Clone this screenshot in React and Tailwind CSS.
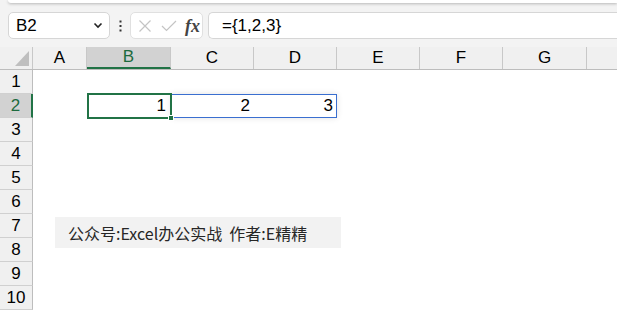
import React from "react";

const cols = [
  { l: "A", w: "w-[54px]" },
  { l: "B", w: "w-[84px]" },
  { l: "C", w: "w-[83px]" },
  { l: "D", w: "w-[83px]" },
  { l: "E", w: "w-[83px]" },
  { l: "F", w: "w-[83px]" },
  { l: "G", w: "w-[84px]" },
];

const rows = [1, 2, 3, 4, 5, 6, 7, 8, 9, 10];

export default function App() {
  return (
    <div
      className="w-[617px] h-[310px] overflow-hidden bg-white text-black"
      style={{ fontFamily: '"Liberation Sans", "Noto Sans CJK SC", sans-serif' }}
    >
      {/* top area */}
      <div className="bg-[#f3f3f3]">
        <div className="h-[12px] pt-0">
          <div className="ml-[8px] h-[3px] rounded-bl-[6px] bg-white shadow-[0_1px_3px_rgba(0,0,0,0.25)]" />
        </div>
        {/* formula bar */}
        <div className="h-[27px] flex items-stretch">
          <div className="ml-[8px] w-[102px] bg-white border border-[#d6d6d6] rounded-[5px] flex items-center pl-[7px] pr-[6px]">
            <span className="text-[17px] leading-none flex-1">B2</span>
            <svg width="10" height="7" viewBox="0 0 10 7">
              <path d="M1.5 1.5 L5 5 L8.5 1.5" fill="none" stroke="#222" strokeWidth="1.6" />
            </svg>
          </div>
          <div className="w-[20px] flex items-center justify-center">
            <svg width="3" height="12" viewBox="0 0 3 12">
              <rect x="0.5" y="0.5" width="2" height="2" fill="#333" />
              <rect x="0.5" y="5" width="2" height="2" fill="#333" />
              <rect x="0.5" y="9.5" width="2" height="2" fill="#333" />
            </svg>
          </div>
          <div className="w-[73px] bg-white border border-[#e0e0e0] rounded-[5px] flex items-center pl-[7px]">
            <svg width="14" height="14" viewBox="0 0 14 14">
              <path d="M1.5 1.5 L12.5 12.5 M12.5 1.5 L1.5 12.5" stroke="#c4c4c4" strokeWidth="1.2" fill="none" />
            </svg>
            <svg width="16" height="12" viewBox="0 0 16 12" className="ml-[9px]">
              <path d="M1 6 L5.5 10.5 L15 1" stroke="#c4c4c4" strokeWidth="1.2" fill="none" />
            </svg>
            <span
              className="ml-[8px] text-[18px] italic font-bold text-[#444] leading-none"
              style={{ fontFamily: '"Liberation Serif", serif' }}
            >
              fx
            </span>
          </div>
          <div className="ml-[5px] flex-1 bg-white border border-r-0 border-[#d6d6d6] rounded-l-[5px] flex items-center pl-[13px]">
            <span className="text-[17px] leading-none">={"{1,2,3}"}</span>
          </div>
        </div>
        <div className="h-[8px]" />
        {/* column headers */}
        <div className="h-[23px] flex border-b border-[#bdbdbd] bg-[#f0f0f0]">
          <div className="w-[33px] border-r border-[#c8c8c8] flex items-end justify-end pr-[3px] pb-[3px]">
            <svg width="14" height="15" viewBox="0 0 14 15">
              <path d="M14 0 L14 15 L0 15 Z" fill="#bfbfbf" />
            </svg>
          </div>
          {cols.map((c) => (
            <div
              key={c.l}
              className={`${c.w} shrink-0 flex items-center justify-center text-[17px] border-r ${
                c.l === "B"
                  ? "bg-[#d2d2d2] text-[#1d6b3e] border-b-2 border-b-[#217346] border-r-[#c8c8c8]"
                  : "border-[#c8c8c8]"
              }`}
            >
              {c.l}
            </div>
          ))}
          <div className="flex-1" />
        </div>
      </div>

      {/* body */}
      <div className="relative">
        {rows.map((r) => (
          <div key={r} className="h-[24px] flex">
            <div
              className={`w-[33px] shrink-0 flex items-center justify-center text-[17px] border-b border-[#d0d0d0] ${
                r === 2
                  ? "bg-[#d2d2d2] text-[#1d6b3e] border-r-2 border-r-[#217346]"
                  : "bg-[#f0f0f0] border-r border-r-[#bdbdbd]"
              }`}
            >
              {r}
            </div>
            {r === 2 ? (
              <div className="flex text-[17px]">
                <div className="w-[54px]" />
                <div className="w-[84px] flex items-center justify-end pr-[5px]">1</div>
                <div className="w-[83px] flex items-center justify-end pr-[4px]">2</div>
                <div className="w-[83px] flex items-center justify-end pr-[4px]">3</div>
              </div>
            ) : null}
          </div>
        ))}

        {/* range selection */}
        <div className="absolute left-[171px] top-[24px] w-[166px] h-[24px] border border-[#3a6fd0] shadow-[0_0_6px_rgba(0,0,0,0.12)]" />
        {/* active cell */}
        <div className="absolute left-[87px] top-[23px] w-[85px] h-[26px] border-2 border-[#217346]" />
        {/* fill handle */}
        <div className="absolute left-[168px] top-[45px] w-[6px] h-[6px] bg-[#217346] border border-white" />

        {/* text box */}
        <div
          className="absolute left-[55px] top-[147px] w-[286px] h-[31px] bg-[#f2f2f2] flex items-center pl-[13px] text-[16px] text-[#262626]"
          style={{ fontFamily: '"Noto Sans CJK SC", "Noto Sans", sans-serif' }}
        >
          公众号:Excel办公实战&nbsp;&nbsp;作者:E精精
        </div>
      </div>
    </div>
  );
}
